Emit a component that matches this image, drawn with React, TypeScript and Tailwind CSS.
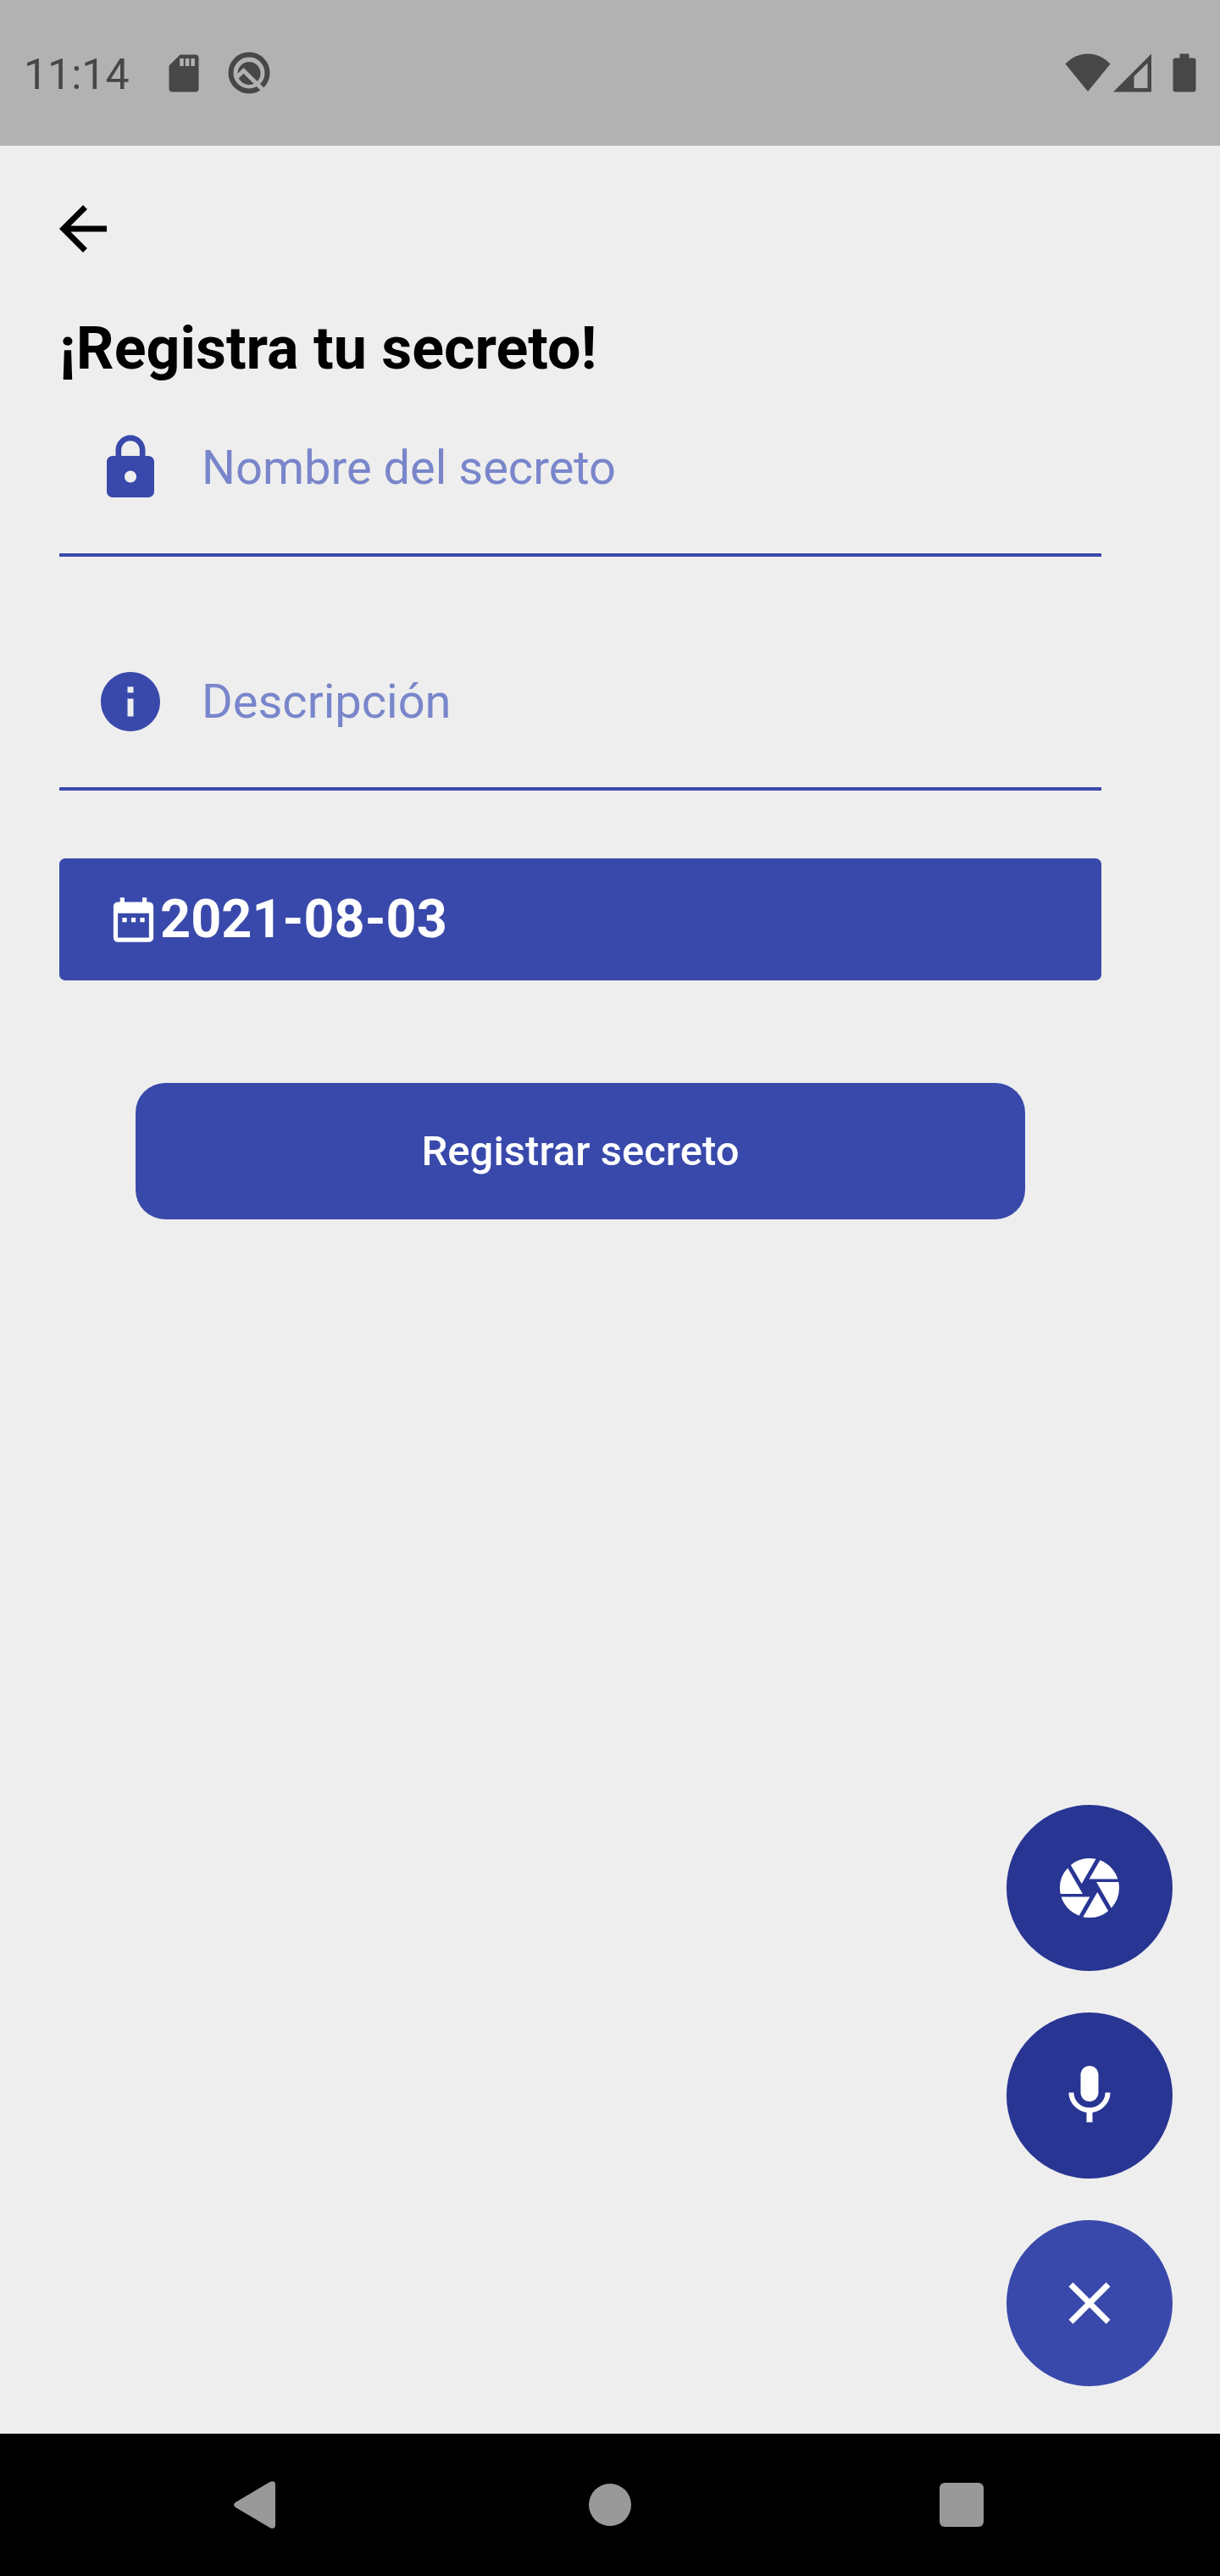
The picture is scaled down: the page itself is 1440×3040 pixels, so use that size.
import type { ReactNode } from "react";
import { MdArrowBack, MdCamera, MdClose, MdDateRange, MdInfo, MdLock } from "react-icons/md";

function StatusBar() {
  return (
    <header className="flex h-[172px] shrink-0 items-center justify-between bg-[#b2b2b2] pr-7 pl-7 text-[#474747]">
      <div className="flex items-center">
        <span className="pt-1 text-[50px] leading-[58px]">11:14</span>
        <svg viewBox="0 0 36 45" className="ml-[46px] h-[45px] w-9" fill="currentColor" aria-label="Tarjeta SD">
          <path
            fillRule="evenodd"
            d="M13.500 0.500H31.500a4 4 0 0 1 4 4V40.500a4 4 0 0 1-4 4H4.500a4 4 0 0 1-4-4V13.500ZM13.200 5v9h4.500V5Zm6.600 0v9h4.500V5Zm6.600 0v9h4.500V5Z"
          />
        </svg>
        <svg viewBox="0 0 50 50" className="ml-[34px] h-[50px] w-[50px]" aria-label="Notificación">
          <circle cx="25" cy="25" r="21.500" fill="none" stroke="currentColor" strokeWidth="6" />
          <circle cx="25" cy="25.500" r="13.500" fill="currentColor" />
          <path d="M9 31.500L18.500 22.500L44 47.500" fill="none" stroke="#b2b2b2" strokeWidth="5" />
        </svg>
      </div>
      <div className="flex items-center">
        <svg viewBox="0 0 54 46" className="h-[46px] w-[54px]" fill="currentColor" aria-label="Wi-Fi">
          <path d="M0.500 12.500C8 4.500 17 0.500 27 0.500S46 4.500 53.500 12.500L27 45Z" />
        </svg>
        <svg viewBox="0 0 46 46" className="ml-[3px] h-[46px] w-[46px]" fill="currentColor" aria-label="Señal móvil">
          <path fillRule="evenodd" d="M0 45.500L45 0.500V45.500ZM24.500 27V41H40.500V11.500Z" />
        </svg>
        <svg viewBox="0 0 28 46" className="ml-6 h-[46px] w-7" fill="currentColor" aria-label="Batería">
          <path d="M8.500 0.500H19.500V5.500H24.500a3 3 0 0 1 3 3V42.500a3 3 0 0 1-3 3H3.500a3 3 0 0 1-3-3V8.500a3 3 0 0 1 3-3H8.500Z" />
        </svg>
      </div>
    </header>
  );
}

function Field({ id, label, icon }: { id: string; label: string; icon: ReactNode }) {
  return (
    <div className="flex h-[161px] items-start border-b-4 border-[#3949ab] pt-[14px] pl-[42px]">
      <label htmlFor={id} aria-label={label} className="text-[84px] text-[#3949ab]">
        {icon}
      </label>
      <input
        id={id}
        type="text"
        placeholder={label}
        className="ml-[42px] h-[84px] min-w-0 flex-1 bg-transparent text-[56px] text-[#3949ab] outline-none placeholder:text-[#7986cb]"
      />
    </div>
  );
}

function Fab({ label, className, children }: { label: string; className: string; children: ReactNode }) {
  return (
    <button
      type="button"
      aria-label={label}
      className={`flex h-[196px] w-[196px] items-center justify-center rounded-full text-[84px] text-white ${className}`}
    >
      {children}
    </button>
  );
}

function MicIcon() {
  return (
    <svg viewBox="0 0 24 24" width="1em" height="1em" fill="currentColor" aria-hidden="true">
      <path d="M12 14c1.660 0 2.990-1.340 2.990-3L15 5c0-1.660-1.340-3-3-3S9 3.340 9 5v6c0 1.660 1.340 3 3 3zm5.300-3c0 3-2.540 5.100-5.300 5.100S6.700 14 6.700 11H5c0 3.410 2.720 6.230 6 6.720V21h2v-3.280c3.280-.48 6-3.300 6-6.720h-1.700z" />
    </svg>
  );
}

function NavigationBar() {
  return (
    <nav className="flex h-[168px] shrink-0 items-center justify-center gap-[315px] bg-black text-[#999999]">
      <button type="button" aria-label="Atrás" className="flex h-[100px] w-[100px] items-center justify-center">
        <svg viewBox="0 0 58 56" className="h-14 w-[58px]" fill="currentColor">
          <path d="M2 25Q-2 28 2 31L43 55.200Q49 57.500 49 51.500V4.500Q49-1.500 43 0.800Z" />
        </svg>
      </button>
      <button type="button" aria-label="Inicio" className="flex h-[100px] w-[100px] items-center justify-center">
        <span className="h-[50px] w-[50px] rounded-full bg-[#999999]" />
      </button>
      <button type="button" aria-label="Recientes" className="flex h-[100px] w-[100px] items-center justify-center">
        <span className="h-[52px] w-[52px] rounded-md bg-[#999999]" />
      </button>
    </nav>
  );
}

export default function App() {
  return (
    <div className="flex min-h-screen flex-col bg-[#eeeeee] font-['Roboto',sans-serif]">
      <StatusBar />
      <main className="flex flex-1 flex-col pt-14">
        <div className="px-14">
          <button type="button" aria-label="Volver" className="block text-[84px] text-black">
            <MdArrowBack />
          </button>
        </div>
        <form className="mr-[140px] ml-[70px] flex flex-col" onSubmit={(e) => e.preventDefault()}>
          <h1 className="mt-[57px] text-[70px] leading-[84px] font-bold text-black">¡Registra tu secreto!</h1>
          <div className="mt-[43px] flex flex-col gap-[115px]">
            <Field id="nombre" label="Nombre del secreto" icon={<MdLock />} />
            <Field id="descripcion" label="Descripción" icon={<MdInfo />} />
          </div>
          <button
            type="button"
            className="mt-20 flex h-36 items-center rounded-[7px] bg-[#3949ab] px-14 text-[63px] leading-[74px] font-bold text-white"
          >
            <MdDateRange />
            2021-08-03
          </button>
          <button
            type="submit"
            className="mx-[90px] mt-[121px] h-[161px] rounded-[35px] bg-[#3949ab] text-[49px] font-medium text-white"
          >
            Registrar secreto
          </button>
        </form>
        <div className="mt-auto mr-14 mb-14 flex flex-col gap-[49px] self-end">
          <Fab label="Tomar foto" className="bg-[#283593]">
            <MdCamera />
          </Fab>
          <Fab label="Grabar audio" className="bg-[#283593]">
            <MicIcon />
          </Fab>
          <Fab label="Cerrar menú" className="bg-[#3949ab]">
            <MdClose />
          </Fab>
        </div>
      </main>
      <NavigationBar />
    </div>
  );
}
